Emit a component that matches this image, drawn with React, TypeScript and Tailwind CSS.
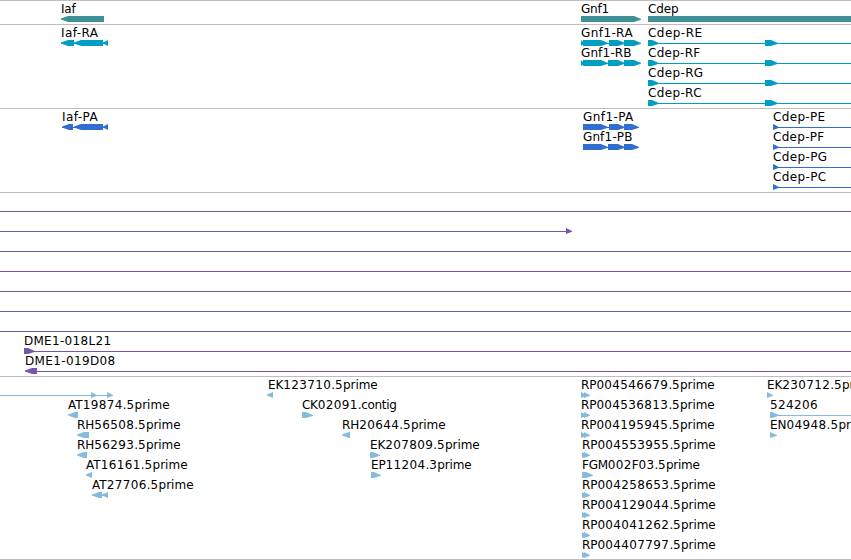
type Dir = "l" | "r";
type Bar = { from: number; to: number; dir?: Dir };
type Feature = {
  label?: string;
  x?: number;
  width?: number;
  line?: [number, number];
  bars?: Bar[];
};
type Row = Feature[];
type Track = { name: string; color: string; height: string; rows: Row[] };

const END = 851;

const l = (from: number, to: number): Bar => ({ from, to, dir: "l" });
const r = (from: number, to: number): Bar => ({ from, to, dir: "r" });

const est = (label: string, x: number, width: number, ...bars: Bar[]): Feature => ({ label, x, width, bars });

const transcript = (label: string, width: number): Feature => ({
  label,
  x: 648,
  width,
  line: [648, END],
  bars: [r(648, 659), r(765, 778)],
});

const protein = (label: string, width: number): Feature => ({
  label,
  x: 773,
  width,
  line: [773, END],
  bars: [r(773, 779)],
});

const fullLine: Row = [{ line: [0, END] }];

const tracks: Track[] = [
  {
    name: "gene",
    color: "text-[#3f8f96]",
    height: "h-6",
    rows: [
      [
        est("Iaf", 61, 14, l(61, 104)),
        est("Gnf1", 581, 28, r(581, 641)),
        est("Cdep", 648, 30, { from: 648, to: END }),
      ],
    ],
  },
  {
    name: "mRNA",
    color: "text-[#009fc2]",
    height: "h-[84px]",
    rows: [
      [
        { label: "Iaf-RA", x: 61, width: 38, line: [61, 108], bars: [l(61, 74), l(74, 103), l(103, 108)] },
        { label: "Gnf1-RA", x: 581, width: 52, line: [581, 640], bars: [r(581, 584), r(583, 608), r(609, 625), r(624, 641)] },
        transcript("Cdep-RE", 54),
      ],
      [
        { label: "Gnf1-RB", x: 581, width: 50, line: [581, 640], bars: [r(581, 584), r(583, 608), r(608, 625), r(624, 641)] },
        transcript("Cdep-RF", 52),
      ],
      [transcript("Cdep-RG", 55)],
      [transcript("Cdep-RC", 54)],
    ],
  },
  {
    name: "CDS",
    color: "text-[#306fd0]",
    height: "h-[84px]",
    rows: [
      [
        { label: "Iaf-PA", x: 62, width: 37, line: [62, 108], bars: [l(62, 73), l(74, 103), l(103, 108)] },
        { label: "Gnf1-PA", x: 583, width: 51, line: [583, 638], bars: [r(583, 608), r(609, 625), r(624, 639)] },
        protein("Cdep-PE", 52),
      ],
      [
        { label: "Gnf1-PB", x: 583, width: 49, line: [583, 638], bars: [r(583, 608), r(608, 625), r(624, 639)] },
        protein("Cdep-PF", 51),
      ],
      [protein("Cdep-PG", 54)],
      [protein("Cdep-PC", 53)],
    ],
  },
  {
    name: "BAC",
    color: "text-[#7656a8]",
    height: "h-[184px]",
    rows: [
      fullLine,
      [{ line: [0, 571], bars: [r(566, 572)] }],
      fullLine,
      fullLine,
      fullLine,
      fullLine,
      fullLine,
      [{ label: "DME1-018L21", x: 24, width: 87, line: [24, END], bars: [r(24, 35)] }],
      [{ label: "DME1-019D08", x: 25, width: 90, line: [25, END], bars: [l(25, 37)] }],
    ],
  },
  {
    name: "EST",
    color: "text-[#87bbdd]",
    height: "h-[183px]",
    rows: [
      [
        { line: [0, 112], bars: [r(91, 97), r(107, 113)] },
        est("EK123710.5prime", 268, 109, l(267, 273)),
        est("RP004546679.5prime", 581, 133, r(581, 587), r(584, 590)),
        est("EK230712.5prime", 767, 109, r(767, 773)),
      ],
      [
        est("AT19874.5prime", 68, 102, l(68, 78)),
        est("CK02091.contig", 302, 94, r(302, 313)),
        est("RP004536813.5prime", 581, 133, r(581, 587), r(584, 590)),
        { label: "524206", x: 770, width: 48, line: [770, END], bars: [r(770, 779)] },
      ],
      [
        est("RH56508.5prime", 77, 103, l(77, 89)),
        est("RH20644.5prime", 342, 103, l(342, 350)),
        est("RP004195945.5prime", 581, 133, r(581, 587), r(584, 590)),
        est("EN04948.5prime", 770, 103, r(770, 777)),
      ],
      [
        est("RH56293.5prime", 77, 103, l(77, 87)),
        est("EK207809.5prime", 370, 109, r(370, 380)),
        est("RP004553955.5prime", 582, 133, r(582, 588), r(584, 590)),
      ],
      [
        est("AT16161.5prime", 86, 102, l(86, 92)),
        est("EP11204.3prime", 371, 100, r(371, 381)),
        est("FGM002F03.5prime", 582, 117, r(582, 593)),
      ],
      [
        { label: "AT27706.5prime", x: 92, width: 102, line: [92, 108], bars: [l(92, 102), l(102, 108)] },
        est("RP004258653.5prime", 582, 133, r(582, 588), r(584, 590)),
      ],
      [est("RP004129044.5prime", 582, 133, r(582, 588), r(584, 590))],
      [est("RP004041262.5prime", 582, 133, r(582, 588), r(584, 590))],
      [est("RP004407797.5prime", 582, 133, r(582, 588), r(584, 590))],
    ],
  },
];

// advance widths of DejaVu Sans, in 1/1000 em
const advance: Record<string, number> = {
  A: 684, B: 686, C: 698, D: 770, E: 632, F: 575, G: 775, H: 752, I: 295, K: 656, L: 557, M: 863,
  N: 748, P: 603, R: 695, T: 611, a: 613, c: 550, d: 635, e: 615, f: 352, g: 635, i: 278, m: 974,
  n: 634, o: 612, p: 635, r: 411, t: 392, "-": 361, ".": 318,
};

// digits sit on an 8px pitch, the other characters share what is left
const letterGap = (text: string, width: number) => {
  const letters = text.replace(/\d/g, "");
  if (!letters) return 0;
  const natural = [...letters].reduce((sum, c) => sum + advance[c], 0) * 0.012;
  return (width + 0.5 - natural - (text.length - letters.length) * 8) / letters.length;
};

const Label = ({ text, x, width }: { text: string; x: number; width: number }) => (
  <span
    className="absolute top-px whitespace-nowrap text-black"
    style={{ left: x, letterSpacing: letterGap(text, width) }}
  >
    {text.split(/(\d+)/).map((part, i) =>
      i % 2 ? (
        <span key={i} className="tracking-[0.365px]">
          {part}
        </span>
      ) : (
        part
      )
    )}
  </span>
);

const BarShape = ({ from, to, dir }: Bar) => {
  const w = to - from;
  const head = Math.min(w, 7);
  let points = `0,0 ${w},0 ${w},6 0,6`;
  if (dir === "r") points = `0,0 ${w - head},0 ${w},3 ${w},3.8 ${w - head},6 0,6`;
  if (dir === "l") points = `${w},0 ${head},0 0,2.6 0,3.4 ${head},6 ${w},6`;

  return (
    <svg className="absolute top-4" style={{ left: from }} width={w} height={6} fill="currentColor">
      <polygon points={points} />
    </svg>
  );
};

const FeatureGlyph = ({ label, x = 0, width = 0, line, bars = [] }: Feature) => (
  <>
    {line && (
      <div className="absolute top-[19px] h-px bg-current" style={{ left: line[0], width: line[1] - line[0] }} />
    )}
    {bars.map((bar) => (
      <BarShape key={bar.from} {...bar} />
    ))}
    {label && <Label text={label} x={x} width={width} />}
  </>
);

export default function App() {
  return (
    <main className="flex h-[560px] w-[851px] flex-col overflow-hidden bg-white font-['DejaVu_Sans',sans-serif] text-[12px] leading-4">
      {tracks.map((track) => (
        <section
          key={track.name}
          className={`${track.height} ${track.color} shrink-0 bg-[linear-gradient(#bebebe,#bebebe)] bg-size-[100%_1px] bg-no-repeat`}
        >
          {track.rows.map((row, i) => (
            <div key={i} className="relative h-5">
              {row.map((feature, j) => (
                <FeatureGlyph key={j} {...feature} />
              ))}
            </div>
          ))}
        </section>
      ))}
      <div className="h-px shrink-0 bg-[#bebebe]" />
    </main>
  );
}
